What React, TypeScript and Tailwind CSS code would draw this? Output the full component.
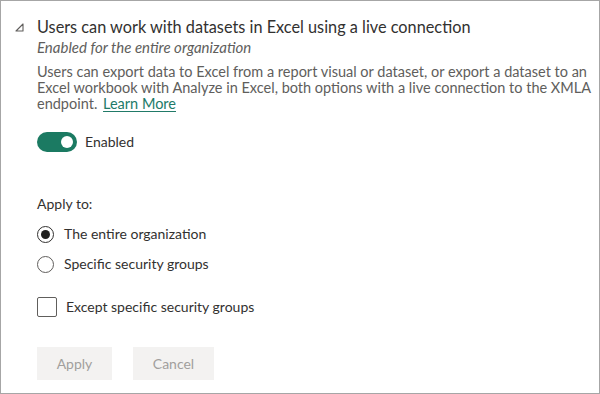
export default function App() {
  return (
    <div className="w-[600px] h-[394px] bg-white border border-[#a6a6a6] font-['Segoe_UI','Lato',sans-serif] text-[#323130]">
      <div className="flex pt-[15px]">
        <div className="w-[36px] flex justify-center pt-[7px] pl-[1px]">
          <svg width="9" height="9" viewBox="0 0 9 9" className="text-[#605e5c]">
            <path d="M8 1 V8 H1 Z" fill="none" stroke="currentColor" strokeWidth="1.1" strokeLinejoin="round" />
          </svg>
        </div>
        <div className="flex-1 pr-[4px]">
          <h1 className="text-[16.3px] leading-[22px] text-[#323130]">
            Users can work with datasets in Excel using a live connection
          </h1>
          <p className="text-[15px] leading-[18px] italic text-[#605e5c]">Enabled for the entire organization</p>
          <p className="mt-[8px] text-[14.5px] leading-[16px] text-[#605e5c]">
            Users can export data to Excel from a report visual or dataset, or export a dataset to an Excel workbook with Analyze in Excel, both options with a live connection to the XMLA endpoint.{' '}
            <a className="text-[#217a68] underline underline-offset-2 ml-[2px]">Learn More</a>
          </p>
          <div className="flex items-center mt-[19px] gap-[8px]">
            <div className="w-[40px] h-[20px] rounded-full bg-[#1b7a62] flex items-center justify-end pr-[4px]">
              <div className="w-[12px] h-[12px] rounded-full bg-white" />
            </div>
            <span className="text-[14px]">Enabled</span>
          </div>
          <p className="mt-[43px] text-[14px] leading-[18px]">Apply to:</p>
          <div className="flex items-center gap-[10px] mt-[12px]">
            <div className="w-[17px] h-[17px] rounded-full border border-[#323130] flex items-center justify-center">
              <div className="w-[9px] h-[9px] rounded-full bg-[#201f1e]" />
            </div>
            <span className="text-[14px] leading-[18px]">The entire organization</span>
          </div>
          <div className="flex items-center gap-[10px] mt-[12px]">
            <div className="w-[17px] h-[17px] rounded-full border border-[#605e5c]" />
            <span className="text-[14px] leading-[18px]">Specific security groups</span>
          </div>
          <div className="flex items-center gap-[9px] mt-[24px]">
            <div className="w-[20px] h-[20px] rounded-[2px] border border-[#605e5c]" />
            <span className="text-[14px] leading-[18px]">Except specific security groups</span>
          </div>
          <div className="flex gap-[21px] mt-[30px]">
            <button className="w-[75px] h-[33px] bg-[#f3f2f1] text-[#a19f9d] text-[14px]">Apply</button>
            <button className="w-[81px] h-[33px] bg-[#f3f2f1] text-[#a19f9d] text-[14px]">Cancel</button>
          </div>
        </div>
      </div>
    </div>
  );
}
